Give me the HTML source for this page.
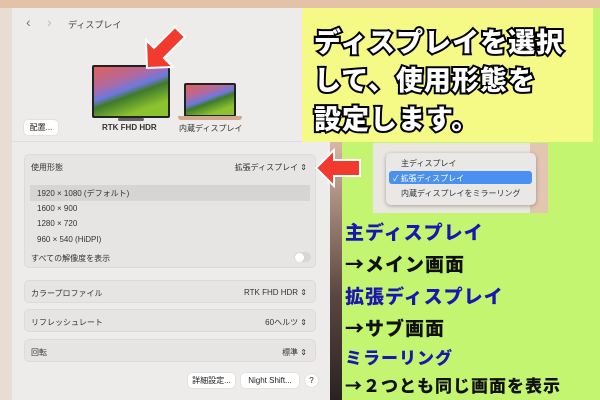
<html><head><style>
*{margin:0;padding:0;box-sizing:border-box}
body{width:600px;height:400px;overflow:hidden;position:relative;background:#c4f570;font-family:"Liberation Sans","Noto Sans CJK JP",sans-serif}
.a{position:absolute}
.win{left:12px;top:8px;width:318px;height:392px;background:#edeceb}
.card{position:absolute;left:12px;width:292px;background:#e6e5e4;border:1px solid #dcdbda;border-radius:5px}
.t{position:absolute;font-size:8px;color:#333}
.big{font-family:"Noto Sans CJK JP",sans-serif;font-weight:900;color:#fff;-webkit-text-stroke:4px #000;paint-order:stroke fill;font-size:27px;letter-spacing:1px}
.bl{font-family:"Noto Sans CJK JP",sans-serif;font-weight:900;font-size:19px;letter-spacing:1px}
.btn{position:absolute;background:#fff;border-radius:4px;font-size:8px;color:#222;text-align:center;line-height:15px;height:15px;box-shadow:0 0 1px #aaa}
</style></head><body>
<div class="a" style="left:0;top:0;width:340px;height:400px;background:#e8ddd3"></div>
<div class="a" style="left:0;top:0;width:600px;height:8px;background:#e3c2a8"></div>
<div class="a" style="left:330px;top:140px;width:12px;height:260px;background:linear-gradient(#d9b9a6,#5a4640 60%,#2a2222)"></div>
<div class="a win">
 <div class="t" style="left:14px;top:6px;font-size:14px;color:#777">‹</div>
 <div class="t" style="left:35px;top:6px;font-size:14px;color:#bbb">›</div>
 <div class="t" style="left:56px;top:10px;font-size:9px;color:#444">ディスプレイ</div>
 <div class="a" style="left:80px;top:57px;width:78px;height:53px;background:#222;border-radius:2px;padding:2px">
  <div style="width:100%;height:100%;background:linear-gradient(160deg,#e0605a 0%,#b06aa0 30%,#6c78e0 45%,#3f7a2a 55%,#8cc230 80%)"></div></div>
 <div class="a" style="left:106px;top:110px;width:26px;height:3px;background:#666;border-radius:2px"></div>
 <div class="a" style="left:172px;top:75px;width:52px;height:34px;background:#222;border-radius:2px;padding:2px">
  <div style="width:100%;height:100%;background:linear-gradient(160deg,#e0605a 0%,#b06aa0 30%,#6c78e0 45%,#3f7a2a 55%,#8cc230 80%)"></div></div>
 <div class="a" style="left:166px;top:108px;width:64px;height:4px;background:#d2a88e;border-radius:0 0 3px 3px"></div>
 <div class="btn" style="left:12px;top:112px;width:34px">配置...</div>
 <div class="t" style="left:90px;top:115px;font-weight:bold">RTK FHD HDR</div>
 <div class="t" style="left:167px;top:115px">内蔵ディスプレイ</div>
 <div class="a" style="left:0;top:133px;width:318px;height:1px;background:#ddd"></div>
 <div class="card" style="top:146px;height:114px">
  <div class="t" style="left:6px;top:7px">使用形態</div>
  <div class="t" style="right:8px;top:7px">拡張ディスプレイ ⇕</div>
  <div class="a" style="left:5px;top:30px;width:280px;height:16px;background:#d6d5d4"></div>
  <div class="t" style="left:12px;top:33px">1920 × 1080 (デフォルト)</div>
  <div class="t" style="left:12px;top:49px">1600 × 900</div>
  <div class="t" style="left:12px;top:64px">1280 × 720</div>
  <div class="t" style="left:12px;top:80px">960 × 540 (HiDPI)</div>
  <div class="t" style="left:6px;top:98px">すべての解像度を表示</div>
  <div class="a" style="left:269px;top:97px;width:17px;height:10px;background:#d8d7d6;border-radius:5px"><div style="width:9px;height:9px;margin:.5px;background:#fff;border-radius:50%"></div></div>
 </div>
 <div class="card" style="top:272px;height:23px"><div class="t" style="left:6px;top:7px">カラープロファイル</div><div class="t" style="right:8px;top:7px">RTK FHD HDR ⇕</div></div>
 <div class="card" style="top:301px;height:23px"><div class="t" style="left:6px;top:7px">リフレッシュレート</div><div class="t" style="right:8px;top:7px">60ヘルツ ⇕</div></div>
 <div class="card" style="top:331px;height:23px"><div class="t" style="left:6px;top:7px">回転</div><div class="t" style="right:8px;top:7px">標準 ⇕</div></div>
 <div class="btn" style="left:176px;top:365px;width:47px">詳細設定...</div>
 <div class="btn" style="left:229px;top:365px;width:58px">Night Shift...</div>
 <div class="btn" style="left:293px;top:366px;width:13px;border-radius:50%;height:13px;line-height:13px">?</div>
</div>
<!-- arrows -->
<svg class="a" style="left:135px;top:20px" width="55" height="55"><path d="M12 48 L11 20 L19 28 L40 7 L50 17 L29 38 L38 47 Z" fill="#f23a2e" stroke="#fff" stroke-width="2" stroke-linejoin="miter"/></svg>
<svg class="a" style="left:312px;top:146px" width="52" height="48"><path d="M4 22 L22 4 L22 14 L48 14 L48 30 L22 30 L22 40 Z" fill="#f23a2e" stroke="#fff" stroke-width="2"/></svg>
<!-- yellow box -->
<div class="a" style="left:302px;top:8px;width:291px;height:134px;background:#f5f985"></div>
<div class="a big" style="left:314px;top:21px">ディスプレイを選択</div>
<div class="a big" style="left:314px;top:59px">して、使用形態を</div>
<div class="a big" style="left:314px;top:98px">設定します。</div>
<!-- dropdown -->
<div class="a" style="left:373px;top:143px;width:175px;height:70px;background:#ebe6e1"></div>
<div class="a" style="left:530px;top:143px;width:18px;height:70px;background:#e2c6b2"></div>
<div class="a" style="left:386px;top:153px;width:150px;height:52px;background:#e9e8e7;border-radius:5px;box-shadow:0 1px 4px rgba(0,0,0,.3)"></div>
<div class="t a" style="left:401px;top:158px;font-size:8px;color:#333">主ディスプレイ</div>
<div class="a" style="left:389px;top:171px;width:143px;height:13px;background:#4a90f0;border-radius:3px"></div>
<div class="t a" style="left:393px;top:173px;font-size:8px;color:#fff">✓ 拡張ディスプレイ</div>
<div class="t a" style="left:401px;top:188px;font-size:8px;color:#333">内蔵ディスプレイをミラーリング</div>
<!-- bottom text -->
<div class="a bl" style="left:345px;top:218px;color:#1a16b0">主ディスプレイ</div>
<div class="a bl" style="left:345px;top:250px;color:#111">→メイン画面</div>
<div class="a bl" style="left:345px;top:282px;color:#1a16b0">拡張ディスプレイ</div>
<div class="a bl" style="left:345px;top:314px;color:#111">→サブ画面</div>
<div class="a bl" style="left:345px;top:344px;color:#1a16b0;font-size:17px">ミラーリング</div>
<div class="a bl" style="left:345px;top:372px;color:#111;font-size:17px">→２つとも同じ画面を表示</div>
</body></html>
